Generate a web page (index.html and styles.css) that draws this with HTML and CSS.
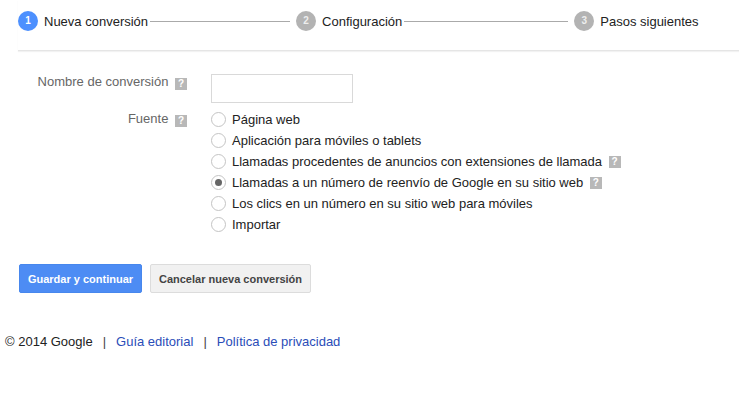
FILE: index.html
```html
<!DOCTYPE html>
<html lang="es">
<head>
  <meta charset="UTF-8" />
  <title>Nueva conversión</title>
  <link rel="stylesheet" href="styles.css">
</head>
<body>
  <div class="steps">
    <div class="step">
      <span class="step-num active">1</span>
      <span class="step-name">Nueva conversión</span>
    </div>
    <div class="step-line line-one"></div>
    <div class="step">
      <span class="step-num">2</span>
      <span class="step-name">Configuración</span>
    </div>
    <div class="step-line line-two"></div>
    <div class="step">
      <span class="step-num">3</span>
      <span class="step-name">Pasos siguientes</span>
    </div>
  </div>

  <form class="form">
    <div class="form-row row-name">
      <div class="form-label">Nombre de conversión <span class="help">?</span></div>
      <input class="text-input" type="text">
    </div>
    <div class="form-row">
      <div class="form-label label-source">Fuente <span class="help">?</span></div>
      <div class="options">
        <label class="option"><span class="radio"></span>Página web</label>
        <label class="option"><span class="radio"></span>Aplicación para móviles o tablets</label>
        <label class="option"><span class="radio"></span>Llamadas procedentes de anuncios con extensiones de llamada <span class="help">?</span></label>
        <label class="option"><span class="radio checked"></span>Llamadas a un número de reenvío de Google en su sitio web <span class="help">?</span></label>
        <label class="option"><span class="radio"></span>Los clics en un número en su sitio web para móviles</label>
        <label class="option"><span class="radio"></span>Importar</label>
      </div>
    </div>
    <div class="buttons">
      <button class="btn btn-primary" type="button">Guardar y continuar</button>
      <button class="btn btn-default" type="button">Cancelar nueva conversión</button>
    </div>
  </form>

  <div class="footer">
    <span>© 2014 Google</span>
    <span class="sep">|</span>
    <a href="#">Guía editorial</a>
    <span class="sep">|</span>
    <a href="#">Política de privacidad</a>
  </div>
</body>
</html>
```

FILE: styles.css
```css
body {
  margin: 0;
  background: #fff;
  font-family: "Liberation Sans", Arial, sans-serif;
  font-size: 13px;
  color: #222;
}

.steps {
  display: flex;
  align-items: center;
  height: 51px;
  margin-left: 18px;
  padding: 0 0 8px 0;
  box-sizing: border-box;
  border-bottom: 1px solid #e5e5e5;
  box-shadow: 0 1px 1px #f2f2f2;
}

.step {
  display: flex;
  align-items: center;
  gap: 6px;
}

.step-num {
  width: 20px;
  height: 20px;
  border-radius: 50%;
  background: #b3b3b3;
  color: #eee;
  font-size: 10px;
  font-weight: bold;
  line-height: 20px;
  text-align: center;
}

.step-num.active {
  background: #4d90fe;
  color: #fff;
}

.step-name {
  color: #222;
}

.step-line {
  height: 1px;
  background: #aaa;
  margin: 0 6px 0 2px;
}

.line-one {
  width: 140px;
}

.line-two {
  width: 164px;
}

.form {
  padding-top: 23px;
}

.form-row {
  display: flex;
  align-items: flex-start;
}

.row-name {
  margin-bottom: 6px;
}

.form-label {
  width: 187px;
  margin-right: 24px;
  text-align: right;
  color: #666;
  line-height: 16px;
}

.label-source {
  padding-top: 2px;
}

.text-input {
  width: 142px;
  height: 29px;
  margin: 0;
  padding: 0 4px;
  box-sizing: border-box;
  border: 1px solid #d9d9d9;
  background: #fff;
}

.help {
  display: inline-block;
  width: 12px;
  height: 12px;
  margin-left: 3px;
  background: #b8b8b8;
  color: #fff;
  font-size: 10px;
  font-weight: bold;
  line-height: 12px;
  text-align: center;
  vertical-align: -1px;
}

.options {
  display: flex;
  flex-direction: column;
}

.option {
  display: flex;
  align-items: center;
  height: 21px;
  white-space: pre;
}

.radio {
  width: 13px;
  height: 13px;
  margin-right: 6px;
  border: 1px solid #c4c4c4;
  border-radius: 50%;
  background: #fff;
  display: flex;
  align-items: center;
  justify-content: center;
}

.radio.checked::after {
  content: "";
  width: 7px;
  height: 7px;
  border-radius: 50%;
  background: #666;
}

.buttons {
  display: flex;
  gap: 8px;
  margin: 29px 0 0 19px;
}

.btn {
  height: 29px;
  padding: 0;
  border-radius: 2px;
  font-family: "Liberation Sans", Arial, sans-serif;
  font-size: 11px;
  font-weight: bold;
  white-space: nowrap;
}

.btn-primary {
  width: 123px;
  background: #4d8cf4;
  border: 1px solid #4787ed;
  color: #fff;
}

.btn-default {
  width: 161px;
  background: #f1f1f1;
  border: 1px solid #dcdcdc;
  color: #444;
}

.footer {
  display: flex;
  gap: 10px;
  margin: 41px 0 0 5px;
  line-height: 16px;
  color: #222;
}

.footer .sep {
  color: #444;
}

.footer a {
  color: #2a4db8;
  text-decoration: none;
}
```
